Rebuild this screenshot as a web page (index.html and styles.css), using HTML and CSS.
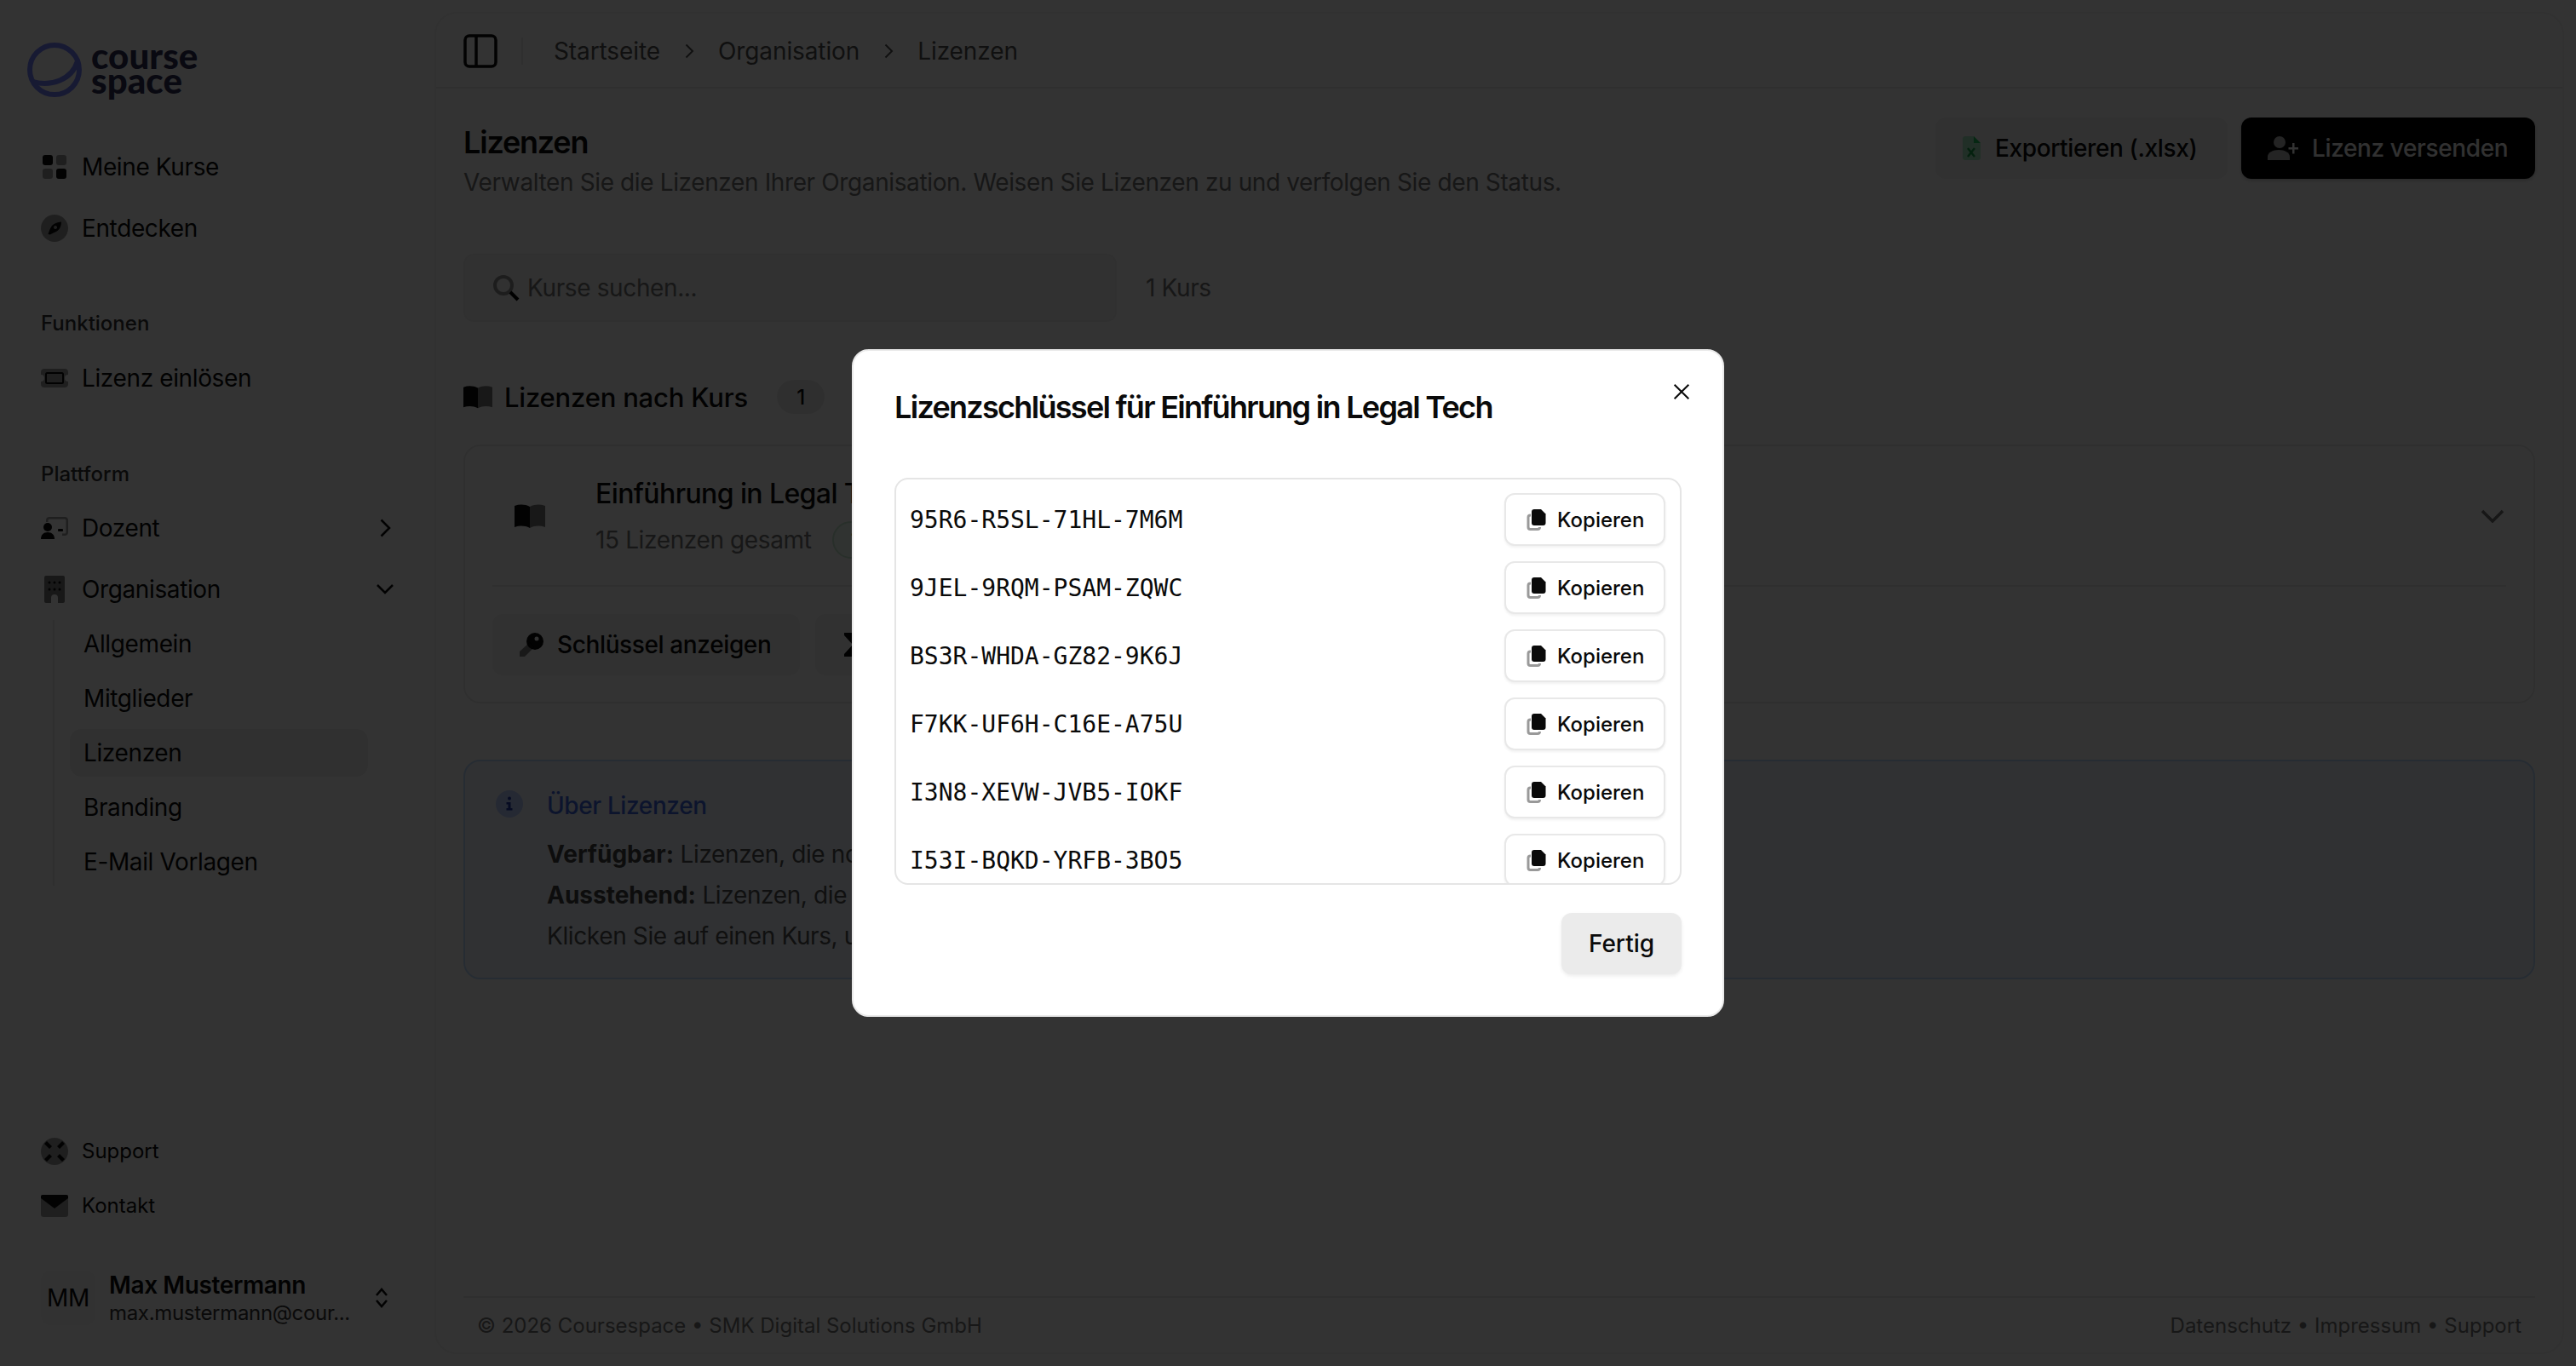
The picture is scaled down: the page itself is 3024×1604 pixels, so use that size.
FILE: index.html
```html
<!DOCTYPE html>
<html lang="de">
<head>
<meta charset="utf-8">
<title>Lizenzen</title>
<link rel="stylesheet" href="styles.css">
</head>
<body>
<svg class="defs" width="0" height="0" aria-hidden="true">
  <symbol id="copy" viewBox="0 0 24 26">
    <path d="M5 8H4.500A2.500 2.500 0 0 0 2 10.500V22a2.500 2.500 0 0 0 2.500 2.500H13a2.500 2.500 0 0 0 2.500-2.500" fill="none" stroke="#000" stroke-opacity=".4" stroke-width="3"/>
    <path d="M9 1h8l5.500 5.500V17a3 3 0 0 1-3 3H9a3 3 0 0 1-3-3V4a3 3 0 0 1 3-3z" fill="#0a0a0a"/>
  </symbol>
</svg>
<div class="app">
  <aside class="sidebar">
    <div class="logo">
      <svg class="logo-mark" viewBox="0 0 64 64"><circle cx="32" cy="32" r="29" fill="none" stroke="#7580ff" stroke-width="6"/><path d="M6 46C28 52 52 44 59 22" fill="none" stroke="#7580ff" stroke-width="6"/></svg>
      <div class="logo-text">course<br>space</div>
    </div>
    <nav class="nav">
      <a class="item"><svg class="ic" viewBox="0 0 32 32"><rect x="2" y="2" width="12" height="12" rx="3"/><rect x="18" y="2" width="12" height="12" rx="3" opacity=".4"/><rect x="2" y="18" width="12" height="12" rx="3" opacity=".4"/><rect x="18" y="18" width="12" height="12" rx="3"/></svg>Meine Kurse</a>
      <a class="item"><svg class="ic" viewBox="0 0 32 32"><circle cx="16" cy="16" r="16" opacity=".4"/><path d="M24 8.500c0 5-2 8.500-4.500 10.500-2.500 1.500-6 3-9 4.500l-2-.5c1-3.500 2.500-7 4.500-10 2.500-2.500 6-4 11-4.500zM17 13a2 2 0 1 0 .01 0z"/></svg>Entdecken</a>
    </nav>
    <div class="label">Funktionen</div>
    <nav class="nav">
      <a class="item"><svg class="ic" viewBox="0 0 32 22"><path d="M4 0h24a4 4 0 0 1 4 4v3a4 4 0 0 0 0 8v3a4 4 0 0 1-4 4H4a4 4 0 0 1-4-4v-3a4 4 0 0 0 0-8V4a4 4 0 0 1 4-4z" opacity=".4"/><rect x="6" y="5" width="20" height="12" rx="1.500" fill="none" stroke="#0a0a0a" stroke-width="2"/></svg>Lizenz einlösen</a>
    </nav>
    <div class="label label-second">Plattform</div>
    <nav class="nav">
      <a class="item"><svg class="ic" viewBox="0 0 32 26"><path d="M10 0h18a4 4 0 0 1 4 4v14a4 4 0 0 1-4 4h-3v-2.500h3a1.500 1.500 0 0 0 1.500-1.500V4A1.500 1.500 0 0 0 28 2.500H10A1.500 1.500 0 0 0 8.500 4v2H6V4a4 4 0 0 1 4-4z" opacity=".4"/><rect x="20" y="14" width="6" height="3" rx="1"/><circle cx="8" cy="12" r="5"/><path d="M0 26c0-5 3-8 8-8s8 3 8 8z"/></svg><span class="grow">Dozent</span><svg class="chev" viewBox="0 0 24 24"><path d="M7.500 2.500L17 12l-9.500 9.500"/></svg></a>
      <a class="item"><svg class="ic" viewBox="0 0 32 32"><path d="M6 0h20a2 2 0 0 1 2 2v28a2 2 0 0 1-2 2h-6v-6a4 4 0 0 0-8 0v6H6a2 2 0 0 1-2-2V2a2 2 0 0 1 2-2z" opacity=".55"/><g><circle cx="10" cy="8" r="1.500"/><circle cx="16" cy="8" r="1.500"/><circle cx="22" cy="8" r="1.500"/><circle cx="10" cy="16" r="1.500"/><circle cx="16" cy="16" r="1.500"/><circle cx="22" cy="16" r="1.500"/></g></svg><span class="grow">Organisation</span><svg class="chev" viewBox="0 0 24 24"><path d="M3 7l9 9 9-9"/></svg></a>
    </nav>
    <div class="subnav">
      <a class="subitem">Allgemein</a>
      <a class="subitem">Mitglieder</a>
      <a class="subitem active">Lizenzen</a>
      <a class="subitem">Branding</a>
      <a class="subitem">E-Mail Vorlagen</a>
    </div>
    <div class="side-bottom">
      <a class="item small"><svg class="ic" viewBox="0 0 32 32"><circle cx="16" cy="16" r="16" opacity=".4"/><path d="M4 7l3-3 6 6-3 3zM25 4l3 3-6 6-3-3zM4 25l6-6 3 3-6 6zM28 25l-3 3-6-6 3-3z"/></svg>Support</a>
      <a class="item small"><svg class="ic" viewBox="0 0 32 26"><rect width="32" height="26" rx="3" opacity=".4"/><path d="M2 0h28a2 2 0 0 1 2 2v2L16 16 0 4V2a2 2 0 0 1 2-2z"/></svg>Kontakt</a>
      <div class="user">
        <div class="avatar">MM</div>
        <div class="user-info">
          <div class="user-name">Max Mustermann</div>
          <div class="user-mail">max.mustermann@cour...</div>
        </div>
        <svg class="updown" viewBox="0 0 16 24"><path d="M2 9l6-7 6 7M2 15l6 7 6-7"/></svg>
      </div>
    </div>
  </aside>

  <main class="panel">
    <header class="topbar">
      <svg class="toggle" viewBox="0 0 40 40"><rect x="2" y="2" width="36" height="36" rx="5"/><path d="M15 2v36"/></svg>
      <span class="sep"></span>
      <a class="crumb">Startseite</a>
      <svg class="crumb-chev" viewBox="0 0 16 24"><path d="M4.500 4.500L12 12l-7.500 7.500"/></svg>
      <a class="crumb">Organisation</a>
      <svg class="crumb-chev" viewBox="0 0 16 24"><path d="M4.500 4.500L12 12l-7.500 7.500"/></svg>
      <a class="crumb">Lizenzen</a>
    </header>
    <div class="content">
      <div class="head">
        <div class="head-text">
          <h1 class="title">Lizenzen</h1>
          <p class="subtitle">Verwalten Sie die Lizenzen Ihrer Organisation. Weisen Sie Lizenzen zu und verfolgen Sie den Status.</p>
        </div>
        <div class="head-actions">
          <button class="btn btn-soft"><svg class="btn-ic" viewBox="0 0 21 28"><path d="M3 0h10l8 8v17a3 3 0 0 1-3 3H3a3 3 0 0 1-3-3V3a3 3 0 0 1 3-3z" fill="#4ade80" opacity=".45"/><path d="M13 0l8 8h-8z" fill="#22c55e"/><path d="M6 14l8 10M14 14L6 24" stroke="#16a34a" stroke-width="2.500" fill="none"/></svg>Exportieren (.xlsx)</button>
          <button class="btn btn-dark"><svg class="btn-ic-2" viewBox="0 0 36 28" fill="#fff"><ellipse cx="14" cy="7" rx="7" ry="7" opacity=".7"/><path d="M0 28v-4c0-5 6-8 13-8s13 3 13 8v4z" opacity=".7"/><path d="M29 8h2.500v5H36v2.500h-4.500v5H29v-5h-4.500V13H29z"/></svg>Lizenz versenden</button>
        </div>
      </div>
      <div class="search-row">
        <div class="search"><svg class="search-ic" viewBox="0 0 32 32"><circle cx="13" cy="13" r="10" fill="none" stroke="#000" stroke-opacity=".4" stroke-width="4"/><path d="M21 21l9 9" stroke="#000" stroke-width="4"/></svg>Kurse suchen...</div>
        <span class="count">1 Kurs</span>
      </div>
      <div class="section-head">
        <svg class="book-s" viewBox="0 0 36 28"><path d="M0 2c6-2 12-2 18 1v25c-6-3-12-3-18-1z"/><path d="M36 2c-6-2-12-2-18 1v25c6-3 12-3 18-1z" opacity=".55"/></svg>
        <h2 class="section-title">Lizenzen nach Kurs</h2>
        <span class="badge">1</span>
      </div>
      <section class="card">
        <div class="card-top">
          <svg class="book" viewBox="0 0 36 28"><path d="M0 2c6-2 12-2 18 1v25c-6-3-12-3-18-1z"/><path d="M36 2c-6-2-12-2-18 1v25c6-3 12-3 18-1z" opacity=".55"/></svg>
          <div class="card-text">
            <div class="card-title">Einführung in Legal Tech</div>
            <div class="card-sub">15 Lizenzen gesamt <span class="pill">15 verfügbar</span></div>
          </div>
          <svg class="card-chev" viewBox="0 0 28 16"><path d="M2 2l12 12L26 2"/></svg>
        </div>
        <div class="card-actions">
          <button class="btn-muted"><svg class="key" viewBox="0 0 28 28"><circle cx="18" cy="10" r="10"/><circle cx="20" cy="7" r="2.500" fill="#f5f5f5"/><path d="M0 22l12-11 5 6-9 9-2 2H0z" opacity=".5"/></svg>Schlüssel anzeigen</button>
          <button class="btn-muted"><svg class="key" viewBox="0 0 28 28"><path d="M2 0h24v3L16 14l10 11v3H2v-3l10-11L2 3z"/></svg>Zuweisungen anzeigen</button>
        </div>
      </section>
      <section class="info">
        <svg class="info-ic" viewBox="0 0 32 32"><circle cx="16" cy="16" r="16" fill="#3b63f6" opacity=".3"/><circle cx="16" cy="9.500" r="2" fill="#1e3aa8"/><path d="M12.500 14h5v7h2v2.500h-7V21h2v-4.500h-2z" fill="#1e3aa8"/></svg>
        <div class="info-body">
          <h3 class="info-title">Über Lizenzen</h3>
          <p class="info-line"><b>Verfügbar:</b> Lizenzen, die noch nicht zugewiesen wurden.</p>
          <p class="info-line"><b>Ausstehend:</b> Lizenzen, die versendet, aber noch nicht eingelöst wurden.</p>
          <p class="info-line">Klicken Sie auf einen Kurs, um Details zu den Lizenzen anzuzeigen.</p>
        </div>
      </section>
    </div>
    <footer class="footer">
      <span>© 2026 Coursespace • SMK Digital Solutions GmbH</span>
      <span>Datenschutz • Impressum • Support</span>
    </footer>
  </main>
</div>

<div class="overlay">
  <div class="modal">
    <svg class="close" viewBox="0 0 24 24"><path d="M2 2l20 20M22 2L2 22"/></svg>
    <h2 class="modal-title">Lizenzschlüssel für Einführung in Legal Tech</h2>
    <div class="keys">
      <div class="key-row"><code class="code">95R6-R5SL-71HL-7M6M</code><button class="copy"><svg class="copy-ic"><use href="#copy"/></svg>Kopieren</button></div>
      <div class="key-row"><code class="code">9JEL-9RQM-PSAM-ZQWC</code><button class="copy"><svg class="copy-ic"><use href="#copy"/></svg>Kopieren</button></div>
      <div class="key-row"><code class="code">BS3R-WHDA-GZ82-9K6J</code><button class="copy"><svg class="copy-ic"><use href="#copy"/></svg>Kopieren</button></div>
      <div class="key-row"><code class="code">F7KK-UF6H-C16E-A75U</code><button class="copy"><svg class="copy-ic"><use href="#copy"/></svg>Kopieren</button></div>
      <div class="key-row"><code class="code">I3N8-XEVW-JVB5-IOKF</code><button class="copy"><svg class="copy-ic"><use href="#copy"/></svg>Kopieren</button></div>
      <div class="key-row"><code class="code">I53I-BQKD-YRFB-3BO5</code><button class="copy"><svg class="copy-ic"><use href="#copy"/></svg>Kopieren</button></div>
    </div>
    <div class="modal-foot"><button class="done">Fertig</button></div>
  </div>
</div>
</body>
</html>
```

FILE: styles.css
```css
* { box-sizing: border-box; margin: 0; padding: 0; letter-spacing: -.0135em; }
html, body { height: 100%; }
body { font-family: Inter, "Liberation Sans", sans-serif; color: #0a0a0a; background: #fff; overflow: hidden; font-size: 28px; }
button { font-family: inherit; border: 0; }
.defs { position: absolute; }

.app { display: flex; height: 1604px; }

/* Sidebar */
.sidebar { width: 512px; flex: none; padding: 50px 32px 48px; display: flex; flex-direction: column; }
.logo { display: flex; align-items: center; height: 64px; gap: 11px; margin-bottom: 50px; }
.logo-mark { width: 64px; height: 64px; flex: none; }
.logo-text { font-family: Lato, sans-serif; font-weight: 900; font-size: 42px; line-height: 29px; color: #2f2f55; letter-spacing: .1px; margin-top: -4px; }
.nav { display: flex; flex-direction: column; gap: 8px; }
.item { display: flex; align-items: center; height: 64px; padding: 0 16px; gap: 16px; font-size: 28px; line-height: 40px; }
.item.small { height: 56px; font-size: 24px; gap: 16px; letter-spacing: 0; }
.ic { width: 32px; height: 32px; flex: none; fill: #0a0a0a; }
.grow { flex: 1; }
.chev { width: 24px; height: 24px; fill: none; stroke: #0a0a0a; stroke-width: 2.500; }
.label { font-size: 24px; line-height: 32px; font-weight: 500; color: #333; padding-left: 16px; margin: 64px 0 16px; letter-spacing: 0; }
.label-second { margin: 65px 0 15px; }
.subnav { margin: 4px 0 0 30px; padding-left: 18px; border-left: 2px solid #ececec; display: flex; flex-direction: column; gap: 8px; width: 370px; }
.subitem { display: flex; align-items: center; height: 56px; padding: 0 16px; font-size: 28px; border-radius: 14px; }
.subitem.active { background: #efefef; }
.side-bottom { margin-top: auto; display: flex; flex-direction: column; gap: 8px; }
.user { display: flex; align-items: center; height: 64px; margin-top: 40px; padding: 0 8px 0 16px; gap: 16px; }
.avatar { width: 64px; height: 64px; border-radius: 12px; font-size: 28px; background: #f7f7f7; display: flex; align-items: center; justify-content: center; flex: none; }
.user-info { flex: 1; min-width: 0; padding-top: 2px; }
.user-name { font-size: 28px; line-height: 34px; font-weight: 600; }
.user-mail { font-size: 24px; line-height: 32px; color: #333; white-space: nowrap; }
.updown { width: 16px; height: 24px; fill: none; stroke: #0a0a0a; stroke-width: 2.500; flex: none; margin-right: 16px; }

/* Main */
.panel { flex: 1; margin: 16px 16px 16px 0; border-radius: 24px; box-shadow: 0 0 0 2px #f2f2f2; display: flex; flex-direction: column; min-width: 0; }
.topbar { display: flex; align-items: center; height: 88px; padding: 2px 32px 0; border-bottom: 2px solid #ececec; flex: none; }
.toggle { width: 40px; height: 40px; fill: none; stroke: #0a0a0a; stroke-width: 3.500; flex: none; }
.sep { width: 2px; height: 32px; background: #ececec; margin: 0 36px 0 28px; flex: none; }
.crumb { font-size: 28px; color: #525252; letter-spacing: -.1px; }
.crumb-chev { width: 16px; height: 24px; fill: none; stroke: #525252; stroke-width: 2; margin: 0 26px; flex: none; }

.content { padding: 34px 32px 0; flex: 1; }
.head { display: flex; justify-content: space-between; align-items: flex-start; }
.head-text { padding-top: 9px; }
.title { font-size: 36px; line-height: 40px; font-weight: 600; letter-spacing: -1.2px; }
.subtitle { font-size: 28px; line-height: 40px; color: #737373; margin-top: 7px; }
.head-actions { display: flex; gap: 16px; }
.btn { display: flex; align-items: center; height: 72px; font-size: 28px; font-weight: 500; border-radius: 12px; }
.btn-soft { width: 343px; background: #f5f5f5; color: #0a0a0a; padding-left: 32px; gap: 17px; }
.btn-dark { width: 345px; background: #000; color: #f5f5f5; padding-left: 31px; gap: 16px; box-shadow: 0 2px 4px rgba(0,0,0,.2); }
.btn-ic { width: 21px; height: 28px; flex: none; }
.btn-ic-2 { width: 36px; height: 28px; flex: none; }

.search-row { display: flex; align-items: center; margin-top: 64px; gap: 34px; }
.search { width: 767px; height: 80px; background: #f5f5f5; border: 2px solid #f0f0f0; border-radius: 12px; display: flex; align-items: center; padding-left: 32px; gap: 9px; color: #737373; font-size: 28px; }
.search-ic { width: 32px; height: 32px; flex: none; }
.count { font-size: 28px; color: #737373; }

.section-head { display: flex; align-items: center; margin-top: 68px; height: 40px; }
.book-s { width: 34px; height: 28px; fill: #0a0a0a; flex: none; }
.section-title { font-size: 31px; font-weight: 500; margin-left: 14px; letter-spacing: -.2px; }
.badge { width: 56px; height: 40px; border-radius: 20px; background: #ececec; font-size: 24px; font-weight: 500; display: flex; align-items: center; justify-content: center; margin-left: 34px; }

.card { margin-top: 36px; height: 304px; border: 2px solid #ececec; border-radius: 20px; padding: 0 32px; }
.card-top { display: flex; align-items: center; height: 165px; border-bottom: 2px solid #ececec; }
.book { width: 36px; height: 28px; fill: #0a0a0a; margin-left: 26px; flex: none; }
.card-text { margin-left: 59px; flex: 1; padding-top: 5px; }
.card-title { font-size: 32px; line-height: 40px; font-weight: 500; letter-spacing: -.6px; }
.card-sub { font-size: 28px; line-height: 40px; color: #737373; margin-top: 12px; display: flex; align-items: center; gap: 24px; }
.pill { border: 2px solid #c7e8cf; border-radius: 22px; height: 44px; padding: 0 20px; font-size: 24px; display: flex; align-items: center; color: #15803d; background: #f0fdf4; }
.card-chev { width: 28px; height: 16px; fill: none; stroke: #737373; stroke-width: 3.500; margin-right: 2px; flex: none; }
.card-actions { display: flex; gap: 18px; margin-top: 32px; }
.btn-muted { display: flex; align-items: center; height: 72px; padding: 0 34px 0 32px; gap: 16px; background: #f5f5f5; border-radius: 12px; font-size: 28px; font-weight: 500; color: #0a0a0a; }
.key { width: 28px; height: 28px; fill: #0a0a0a; flex: none; }

.info { margin-top: 66px; height: 258px; border: 2px solid #bfdbfe; background: #eff6ff; border-radius: 20px; padding: 34px 36px; display: flex; gap: 28px; }
.info-ic { width: 32px; height: 32px; flex: none; }
.info-title { font-size: 28px; line-height: 36px; font-weight: 500; color: #3f66e0; }
.info-line { font-size: 28px; line-height: 48px; color: #525252; }
.info-title + .info-line { margin-top: 15px; }
.info-line b { color: #404040; font-weight: 700; letter-spacing: 0; }

.footer { display: flex; justify-content: space-between; align-items: center; height: 66px; margin: 0 32px; padding: 0 16px; border-top: 2px solid #ececec; font-size: 24px; color: #737373; flex: none; }
.footer span { letter-spacing: 0; }

/* Dialog */
.overlay { position: fixed; inset: 0; background: rgba(0,0,0,.8); display: flex; align-items: center; justify-content: center; }
.modal { position: relative; width: 1024px; height: 784px; background: #fff; border: 2px solid #eaeaea; border-radius: 20px; padding: 46px 48px 48px; }
.close { position: absolute; top: 38px; right: 38px; width: 20px; height: 20px; fill: none; stroke: #0a0a0a; stroke-width: 2.500; }
.modal-title { font-size: 36px; line-height: 40px; font-weight: 600; letter-spacing: -1.7px; }
.keys { margin-top: 63px; height: 478px; border: 2px solid #e5e5e5; border-radius: 16px; padding: 16px 17px 16px 16px; overflow: hidden; display: flex; flex-direction: column; gap: 18px; }
.key-row { display: flex; align-items: center; justify-content: space-between; flex: none; height: 62px; }
.code { font-family: "DejaVu Sans Mono", monospace; font-size: 28px; color: #0a0a0a; letter-spacing: 0; }
.copy { display: flex; align-items: center; width: 189px; height: 62px; background: #fff; border: 2px solid #e8e8e8; border-radius: 12px; padding-left: 24px; gap: 12px; font-size: 24px; font-weight: 500; letter-spacing: 0; color: #0a0a0a; box-shadow: 0 2px 3px rgba(0,0,0,.06); }
.copy-ic { width: 24px; height: 26px; flex: none; }
.modal-foot { display: flex; justify-content: flex-end; margin-top: 33px; }
.done { width: 141px; height: 72px; background: #ebebeb; border-radius: 12px; font-size: 28px; font-weight: 500; letter-spacing: 0; color: #0a0a0a; box-shadow: 0 2px 4px rgba(0,0,0,.08); }
```
